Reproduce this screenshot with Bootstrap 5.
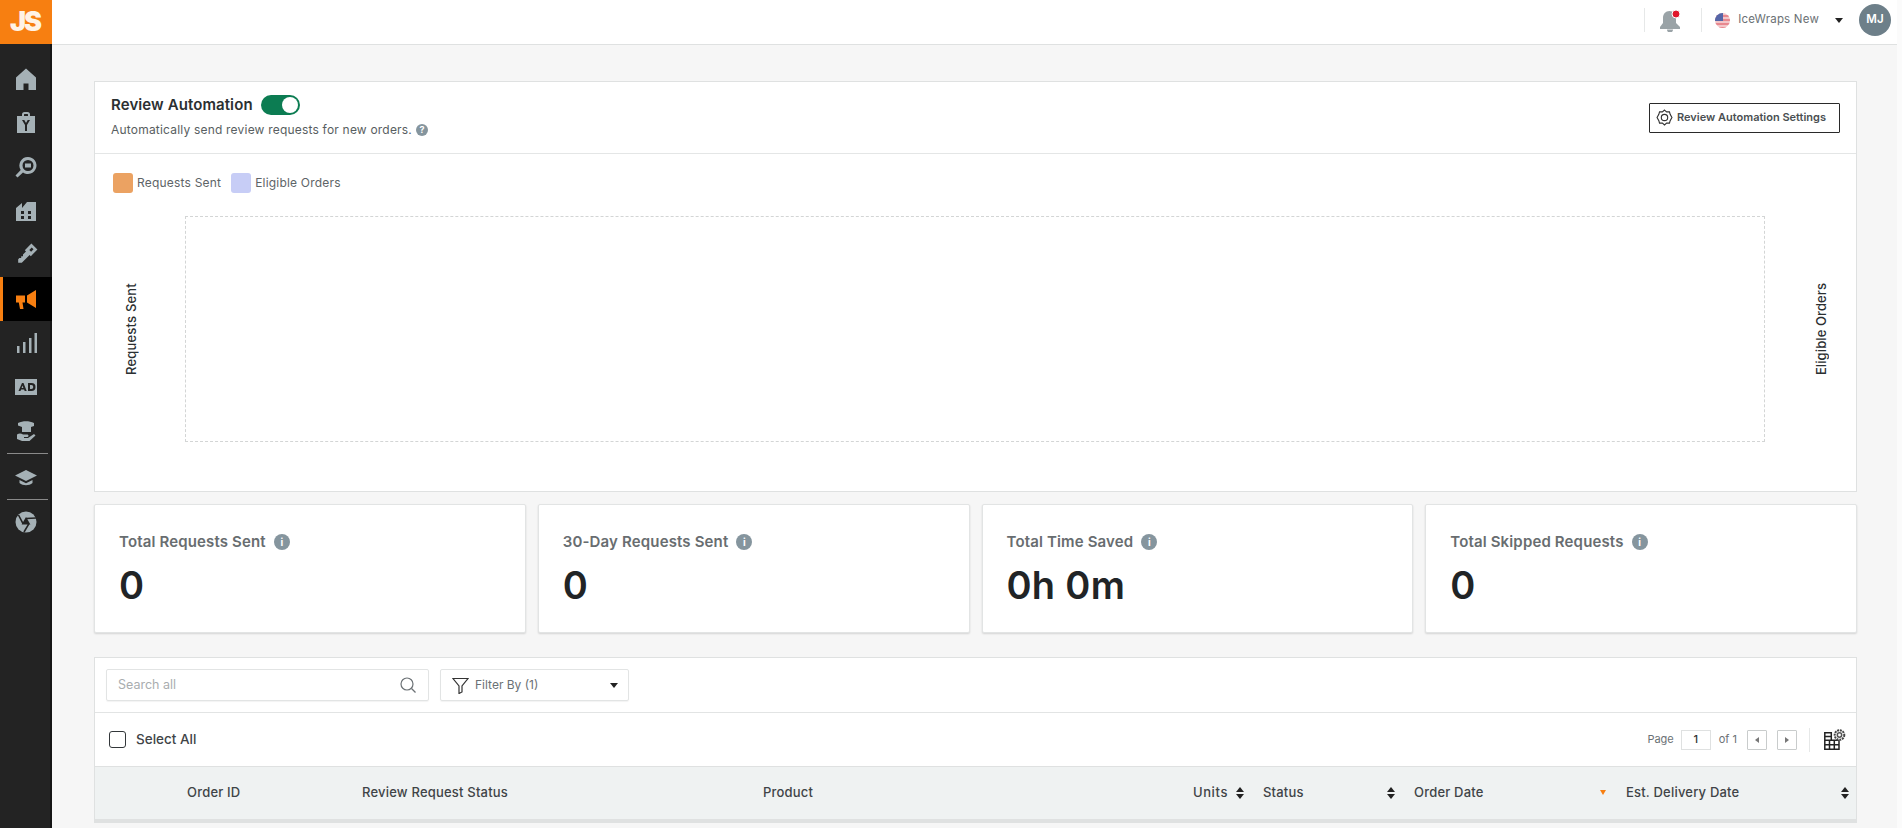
<!DOCTYPE html>
<html lang="en">
<head>
<meta charset="utf-8">
<title>Review Automation</title>
<link href="https://cdn.jsdelivr.net/npm/bootstrap@5.3.0/dist/css/bootstrap.min.css" rel="stylesheet">
<style>
html,body{height:828px;overflow:hidden}
body{font-family:"Inter","Liberation Sans",sans-serif;background:#fbfbfb;color:#4a4f52;font-size:12px}
.shell{height:828px;padding-right:5px}
.rail{width:52px;flex:none;background:#232323;height:828px;box-shadow:inset -2px 0 0 #151515}
.rail-logo{height:44px;background:#f77f11;color:#fff3e6;font-weight:900;font-size:27px;letter-spacing:-2px;padding-right:2px}
.rail-list{padding-top:13px}
.rail-item{height:44px;color:#a5b1b6;position:relative}
.rail-item.on{background:#000;color:#f77f11;box-shadow:inset 3px 0 0 #f77f11}
.rail-rule{height:1px;background:#8a8a8a;margin:0 4px 0 7px}
.rail-short{height:45px}
.rail-item svg{width:24px;height:24px;fill:currentColor}
.main-col{min-width:0;background:#f6f6f6}
.topbar{height:45px;background:#fff;border-bottom:1px solid #dfe1e1;padding-right:6px;padding-bottom:4px}
.top-sep{width:1px;height:24px;background:#e6e8e8}
.bell-icon{margin:0 19px 0 13px}
.flag-icon{margin:0 8px 0 13px}
.acct{color:#6b7175;font-size:11.500px;letter-spacing:.2px}
.caret-dn{width:0;height:0;border-left:4px solid transparent;border-right:4px solid transparent;border-top:5px solid #222}
.avatar{width:32px;height:32px;border-radius:50%;background:#6d7f89;color:#fff;font-weight:600;font-size:11.500px}
.page-body{padding:36px 40px 0 42px}
.panel{background:#fff;border:1px solid #dfe1e1}
.head-row{height:72px;padding:0 16px;border-bottom:1px solid #e4e6e6}
.head-title{font-size:15px;font-weight:600;color:#2b2f31;line-height:20px;letter-spacing:.1px}
.head-sub{font-size:12px;color:#585e61;margin-top:8px;line-height:14px;letter-spacing:.2px}
.head-block{margin-top:-3px}
.tog{width:39px;height:20px;border-radius:10px;background:#0c7c52;padding:2px;justify-content:flex-end}
.tog i{display:block;width:16px;height:16px;border-radius:50%;background:#fff}
.qmark{width:12px;height:12px;border-radius:50%;background:#85959e;color:#fff;font-size:9px;font-weight:700;font-style:normal}
.set-btn{height:30px;width:191px;border:1px solid #2a2a2a;border-radius:1px;font-size:11px;font-weight:600;color:#4a4f52;padding:0 0 0 6px;background:#fff}
.set-btn svg{width:17px;height:17px;flex:none}
.chart-wrap{height:337px;padding:19px 16px 0}
.legend-row{padding-left:2px}
.legend-chip{width:20px;height:20px;border-radius:3px}
.chip-a{background:#eba262}
.chip-b{background:#c7cdf6}
.legend-text{font-size:12px;color:#5e6467;letter-spacing:.2px}
.legend-gap{margin-right:10px}
.chart-row{margin-top:23px;height:226px}
.axis-l{width:74px;padding-left:10px;font-size:13px;font-weight:500;color:#2b2f31;letter-spacing:.2px}
.axis-r{width:75px;padding-left:46px;font-size:13px;font-weight:500;color:#2b2f31;letter-spacing:.1px}
.axis-l span,.axis-r span{writing-mode:vertical-rl;transform:rotate(180deg);line-height:20px}
.plot{border:1px dashed #d3d5d5}
.stats{margin-top:12px;gap:12px}
.stat{height:129px;padding:27px 24px;background:#fff;border:1px solid #e2e4e4;border-radius:2px;box-shadow:0 1px 2px rgba(0,0,0,.14)}
.stat-label{font-size:15px;font-weight:600;color:#686d70;line-height:20px;letter-spacing:.15px}
.info-dot{width:16px;height:16px;border-radius:50%;background:#85959e;color:#fff;font-size:10px;font-weight:700;font-style:normal}
.stat-num{font-size:38px;font-weight:600;color:#212426;line-height:44px;margin-top:11px;letter-spacing:.3px}
.grid-panel{margin-top:24px}
.tools{height:55px;padding:0 11px;border-bottom:1px solid #e2e4e4;gap:11px}
.search-box{width:323px;height:32px;border:1px solid #e2e4e4;border-radius:2px;padding:0 11px;font-size:12.500px;color:#a9adaf;box-shadow:0 1px 1px rgba(0,0,0,.05)}
.filter-box{width:189px;height:32px;border:1px solid #e2e4e4;border-radius:2px;padding:0 10px 0 11px;font-size:12px;color:#6b7175;box-shadow:0 1px 1px rgba(0,0,0,.05)}
.filter-box svg{margin-right:6px}
.sel-row{height:54px;padding:0 10px 0 14px;border-bottom:1px solid #dfe1e1}
.tick{width:17px;height:17px;border:1.500px solid #33373a;border-radius:3px;margin-right:10px}
.sel-text{font-size:13.500px;font-weight:500;color:#3f4447}
.pager{font-size:11px;color:#6b7175}
.page-lbl{margin-right:7px}
.page-num{width:30px;height:20px;border:1px solid #dfe1e1;color:#333;font-weight:500;margin-right:8px}
.page-of{margin-right:10px}
.page-arrow{width:20px;height:20px;border:1px solid #c9cccc;border-radius:1px}
.page-prev{margin-right:10px}
.tri-l{border-top:3px solid transparent;border-bottom:3px solid transparent;border-right:4px solid #777}
.tri-r{border-top:3px solid transparent;border-bottom:3px solid transparent;border-left:4px solid #777}
.pager-sep{width:1px;height:24px;background:#e6e8e8;margin:0 14px 0 12px}
.head-table{table-layout:fixed;width:100%;margin:0}
.head-table th{background:#eff2f2;height:53px;padding:0;font-size:13px;font-weight:500;color:#3f4447;border-bottom:3px solid #dfe1e1;vertical-align:middle;letter-spacing:.2px}
.c1{width:92px}.c2{width:175px}.c3{width:401px}.c4{width:400px}.c5{width:100px}.c6{width:151px}.c7{width:212px}
.sorter{width:8px;flex:none}
.sorter::before{content:"";display:block;border-left:4px solid transparent;border-right:4px solid transparent;border-bottom:5px solid #222;margin-bottom:2px}
.sorter::after{content:"";display:block;border-left:4px solid transparent;border-right:4px solid transparent;border-top:5px solid #222}
.sort-on{width:0;height:0;border-left:3.500px solid transparent;border-right:3.500px solid transparent;border-top:5px solid #f77f11;flex:none}
.pad-sort{padding-right:19px}
.units-text{letter-spacing:.6px}
.pad-sort-on{padding-right:20px}
.pad-sort-end{padding-right:7px}
</style>
</head>
<body>
<div class="shell d-flex">
  <nav class="rail">
    <div class="rail-logo d-flex align-items-center justify-content-center">JS</div>
    <div class="rail-list">
      <div class="rail-item d-flex align-items-center justify-content-center"><svg viewBox="0 0 24 24"><path fill-rule="evenodd" d="M12 1.500 2 10.500V23h7.500v-6.500h5V23H22V10.500z"/></svg></div>
      <div class="rail-item d-flex align-items-center justify-content-center"><svg viewBox="0 0 24 24"><path fill-rule="evenodd" d="M8 5V3.500A2.500 2.500 0 0 1 10.500 1h3A2.500 2.500 0 0 1 16 3.500V5h5v17H3V5zm2 0h4V3.500a.5.500 0 0 0-.5-.5h-3a.5.500 0 0 0-.5.500zM8 9l3 5v6h2v-6l3-5h-2.300L12 12 10.300 9z"/></svg></div>
      <div class="rail-item d-flex align-items-center justify-content-center"><svg viewBox="0 0 24 24"><path fill-rule="evenodd" d="M14 2a8.500 8.500 0 1 1-5 15.400L3.500 22.500 1.500 20.500 6.700 15A8.500 8.500 0 0 1 14 2zm0 3a5.500 5.500 0 1 0 0 11 5.500 5.500 0 0 0 0-11zM11 8.500h6v4h-6z"/></svg></div>
      <div class="rail-item d-flex align-items-center justify-content-center"><svg viewBox="0 0 24 24"><path fill-rule="evenodd" d="M2 22V9l6-5v5l5-6h9v19zM7 12v3h3v-3zm7 0v3h3v-3zm0 5v3h3v-3zm-7 0v3h3v-3z"/></svg></div>
      <div class="rail-item d-flex align-items-center justify-content-center"><svg viewBox="0 0 24 24"><g transform="rotate(45 12 12) translate(12 12) scale(.85) translate(-12 -12)"><path fill-rule="evenodd" d="M7 -2h10v11h-2v13l-3 3-3-3v-2l1.500-1.500L9 17l1.500-1.500L9 14V9H7zM10.500 1v4h3V1z"/></g></svg></div>
      <div class="rail-item on d-flex align-items-center justify-content-center"><svg viewBox="0 0 24 24"><path d="M22 3v18L13 15.500v-7zM2 8.500h9v7H8.500l1 6.500H6l-1.200-6.500H2z"/></svg></div>
      <div class="rail-item d-flex align-items-center justify-content-center"><svg viewBox="0 0 24 24"><path d="M3 15h2.500v7H3zM9 11h2.500v11H9zM15 7h2.500v15H15zM20.500 2H23v20h-2.500z"/></svg></div>
      <div class="rail-item d-flex align-items-center justify-content-center"><svg viewBox="0 0 24 24"><path fill-rule="evenodd" d="M1 4h22v16H1zm7 4-3.500 8h2l.6-1.500h3l.6 1.500h2L9.500 8zm.5 2.500.9 2.500H7.600zM14 8v8h3.500a4 4 0 0 0 0-8zm2 2h1.300a2 2 0 0 1 0 4H16z"/></svg></div>
      <div class="rail-item d-flex align-items-center justify-content-center"><svg viewBox="0 0 24 24"><path d="M4 4c5-2.500 11-2.500 16 0v3l-3 1v5H8V8L4 6.500zM3 15.500c2-1.200 4-1.200 6 0h4c2 0 2 2.500 0 2.500h-3v1h4l6-4 1.500 1.500-6 5.500H8l-5-2z"/></svg></div>
      <div class="rail-rule"></div>
      <div class="rail-item rail-short d-flex align-items-center justify-content-center"><svg viewBox="0 0 24 24"><path d="M12 5 1 10.500 12 16l11-5.500zM5.500 15v3c3.500 3 9.500 3 13 0v-3L12 18.200z"/></svg></div>
      <div class="rail-rule"></div>
      <div class="rail-item d-flex align-items-center justify-content-center"><svg viewBox="0 0 24 24"><circle cx="12" cy="12" r="10.500"/><path fill="#232323" stroke="#232323" stroke-width="1.600" d="M12 8.500l3 5.200H9zM12 8.500 22 8M15 13.700 10 22M9 13.700 4.500 5"/></svg></div>
    </div>
  </nav>
  <main class="main-col flex-grow-1">
    <header class="topbar d-flex align-items-center justify-content-end">
      <div class="top-sep"></div>
      <svg width="24" height="24" viewBox="0 0 24 24" class="bell-icon"><path fill="#9aa3a7" d="M11.500 3c4 0 6.500 3 6.500 7v5l4 4v2H2v-2l3-4v-5c0-4 2.500-7 6.500-7zM9 21.500h6a3 3 0 0 1-6 0z"/><circle cx="18" cy="6" r="4" fill="#e0162b" stroke="#fff" stroke-width="1"/></svg>
      <div class="top-sep"></div>
      <svg width="15" height="15" viewBox="0 0 15 15" class="flag-icon"><defs><clipPath id="flag"><circle cx="7.500" cy="7.500" r="7.500"/></clipPath></defs><g clip-path="url(#flag)"><rect width="15" height="15" fill="#f3c6c9"/><rect y="2" width="15" height="2" fill="#e8888f"/><rect y="6" width="15" height="2" fill="#e8888f"/><rect y="10" width="15" height="2" fill="#e8888f"/><rect y="14" width="15" height="1" fill="#e8888f"/><rect width="8" height="8" fill="#5566a8"/></g></svg>
      <span class="acct me-3">IceWraps New</span>
      <span class="caret-dn me-3"></span>
      <span class="avatar d-flex align-items-center justify-content-center">MJ</span>
    </header>
    <div class="page-body">
      <section class="panel">
        <div class="head-row d-flex align-items-center justify-content-between">
          <div class="head-block">
            <div class="d-flex align-items-center gap-2"><span class="head-title">Review Automation</span><span class="tog d-flex align-items-center"><i></i></span></div>
            <div class="head-sub d-flex align-items-center gap-1">Automatically send review requests for new orders. <span class="qmark d-inline-flex align-items-center justify-content-center">?</span></div>
          </div>
          <button class="set-btn d-flex align-items-center gap-1"><svg viewBox="0 0 24 24" fill="none" stroke="#333" stroke-width="1.600"><circle cx="12" cy="12" r="4.500"/><path d="M12 1.500 15 4h4l1 3.500L22.500 12 20 16.500l-1 3.500h-4l-3 2.500L9 20H5l-1-3.500L1.500 12 4 7.500 5 4h4z"/></svg>Review Automation Settings</button>
        </div>
        <div class="chart-wrap">
          <div class="legend-row d-flex align-items-center">
            <span class="legend-chip chip-a me-1"></span><span class="legend-text legend-gap">Requests Sent</span>
            <span class="legend-chip chip-b me-1"></span><span class="legend-text">Eligible Orders</span>
          </div>
          <div class="chart-row d-flex">
            <div class="axis-l d-flex align-items-center"><span>Requests Sent</span></div>
            <div class="plot flex-grow-1"></div>
            <div class="axis-r d-flex align-items-center"><span>Eligible Orders</span></div>
          </div>
        </div>
      </section>
      <section class="stats d-flex">
        <div class="stat flex-fill w-25"><div class="stat-label d-flex align-items-center gap-2">Total Requests Sent <i class="info-dot d-inline-flex align-items-center justify-content-center">i</i></div><div class="stat-num">0</div></div>
        <div class="stat flex-fill w-25"><div class="stat-label d-flex align-items-center gap-2">30-Day Requests Sent <i class="info-dot d-inline-flex align-items-center justify-content-center">i</i></div><div class="stat-num">0</div></div>
        <div class="stat flex-fill w-25"><div class="stat-label d-flex align-items-center gap-2">Total Time Saved <i class="info-dot d-inline-flex align-items-center justify-content-center">i</i></div><div class="stat-num">0h 0m</div></div>
        <div class="stat flex-fill w-25"><div class="stat-label d-flex align-items-center gap-2">Total Skipped Requests <i class="info-dot d-inline-flex align-items-center justify-content-center">i</i></div><div class="stat-num">0</div></div>
      </section>
      <section class="panel grid-panel">
        <div class="tools d-flex align-items-center">
          <div class="search-box d-flex align-items-center justify-content-between">Search all<svg width="18" height="18" viewBox="0 0 18 18" fill="none" stroke="#6b7175" stroke-width="1.200"><circle cx="8" cy="8" r="6"/><path d="m12.500 12.500 4 4"/></svg></div>
          <div class="filter-box d-flex align-items-center"><svg width="17" height="17" viewBox="0 0 17 17" fill="none" stroke="#333" stroke-width="1.200"><path d="M1 1.500h15L10 9v6l-3 1.500V9z"/></svg>Filter By (1)<span class="caret-dn ms-auto"></span></div>
        </div>
        <div class="sel-row d-flex align-items-center">
          <span class="tick"></span><span class="sel-text">Select All</span>
          <div class="pager d-flex align-items-center ms-auto">
            <span class="page-lbl">Page</span><span class="page-num d-flex align-items-center justify-content-center">1</span><span class="page-of">of 1</span>
            <span class="page-arrow page-prev d-flex align-items-center justify-content-center"><i class="tri-l"></i></span>
            <span class="page-arrow d-flex align-items-center justify-content-center"><i class="tri-r"></i></span>
            <span class="pager-sep"></span>
            <svg width="22" height="22" viewBox="0 0 22 22" fill="none" stroke="#222" stroke-width="1.500"><path d="M.8 3.800h6.500v7.500H15v8.900H.8zM.8 7.500h6.500M.8 11.300h6.500M.8 15.700H15M5.500 11.300v8.900M10.300 11.300v8.900"/><circle cx="15.500" cy="6" r="5.200" fill="#fff" stroke="none"/><circle cx="15.500" cy="6" r="2.200" stroke="#555"/><circle cx="15.500" cy="6" r="4.800" stroke="#444" stroke-dasharray="2 .8" stroke-width="2"/></svg>
          </div>
        </div>
        <table class="head-table">
          <colgroup><col class="c1"><col class="c2"><col class="c3"><col class="c4"><col class="c5"><col class="c6"><col class="c7"><col></colgroup>
          <thead><tr>
            <th></th>
            <th>Order ID</th>
            <th>Review Request Status</th>
            <th>Product</th>
            <th><div class="d-flex align-items-center justify-content-end gap-2 pad-sort"><span class="units-text">Units</span><span class="sorter"></span></div></th>
            <th><div class="d-flex align-items-center justify-content-between pad-sort">Status<span class="sorter"></span></div></th>
            <th><div class="d-flex align-items-center justify-content-between pad-sort-on">Order Date<span class="sort-on"></span></div></th>
            <th><div class="d-flex align-items-center justify-content-between pad-sort-end">Est. Delivery Date<span class="sorter"></span></div></th>
          </tr></thead>
        </table>
      </section>
    </div>
  </main>
</div>
<script src="https://cdn.jsdelivr.net/npm/bootstrap@5.3.0/dist/js/bootstrap.bundle.min.js"></script>
</body>
</html>
